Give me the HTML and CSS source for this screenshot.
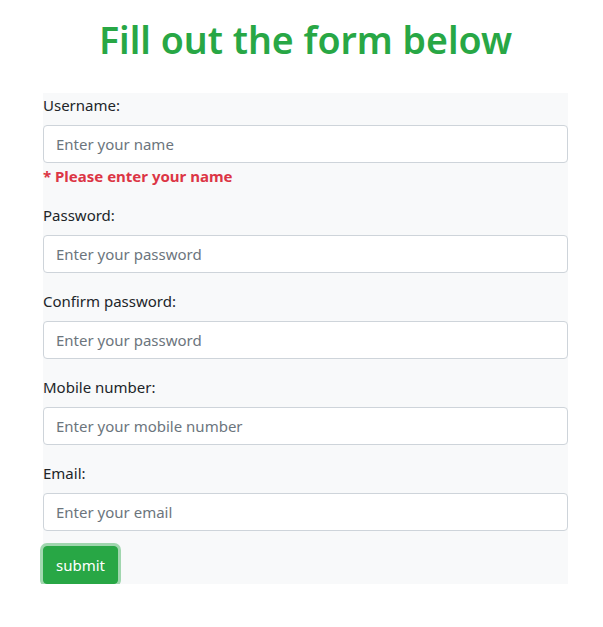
FILE: index.html
```html
<!DOCTYPE html>
<html>
<head>
<meta charset="utf-8">
<link rel="stylesheet" href="styles.css">
</head>
<body>
<h1 class="title">Fill out the form below</h1>
<form class="form">
  <div class="group">
    <label class="label">Username:</label>
    <input class="input" type="text" placeholder="Enter your name">
    <div class="error">* Please enter your name</div>
  </div>
  <div class="group">
    <label class="label">Password:</label>
    <input class="input" type="password" placeholder="Enter your password">
  </div>
  <div class="group">
    <label class="label">Confirm password:</label>
    <input class="input" type="password" placeholder="Enter your password">
  </div>
  <div class="group">
    <label class="label">Mobile number:</label>
    <input class="input" type="text" placeholder="Enter your mobile number">
  </div>
  <div class="group">
    <label class="label">Email:</label>
    <input class="input" type="text" placeholder="Enter your email">
  </div>
  <button class="btn" type="button">submit</button>
</form>
</body>
</html>
```
FILE: styles.css
```css
* { box-sizing: border-box; }
body {
  margin: 0;
  padding-left: 8px;
  font-family: "Noto Sans", "Open Sans", sans-serif;
  font-size: 15px;
  line-height: 24px;
  color: #212529;
  background: #fff;
}
.title {
  margin: 16px 0 29px;
  text-align: center;
  color: #28a745;
  font-size: 37.5px;
  font-weight: 600;
  line-height: 48px;
}
.form {
  margin-left: 35px;
  width: 525px;
  background: #f8f9fa;
  display: flex;
  flex-direction: column;
  align-items: flex-start;
}
.group {
  width: 100%;
  display: flex;
  flex-direction: column;
  margin-bottom: 16px;
}
.label {
  display: block;
  margin-bottom: 8px;
  line-height: 24px;
}
.input {
  display: block;
  width: 100%;
  height: 38px;
  padding: 6px 12px;
  font-family: inherit;
  font-size: 15px;
  color: #495057;
  background: #fff;
  border: 1px solid #ced4da;
  border-radius: 4px;
}
.input::placeholder { color: #6c757d; }
.error {
  color: #dc3545;
  font-weight: 700;
  line-height: 24px;
  margin-top: 1px;
  margin-bottom: -1px;
}
.btn {
  margin-top: -1px;
  height: 38px;
  padding: 6px 12px;
  font-family: inherit;
  font-size: 15px;
  color: #fff;
  background: #28a745;
  border: 1px solid #28a745;
  border-radius: 4px;
  box-shadow: 0 0 0 3px rgba(72, 180, 97, 0.5);
}
```
